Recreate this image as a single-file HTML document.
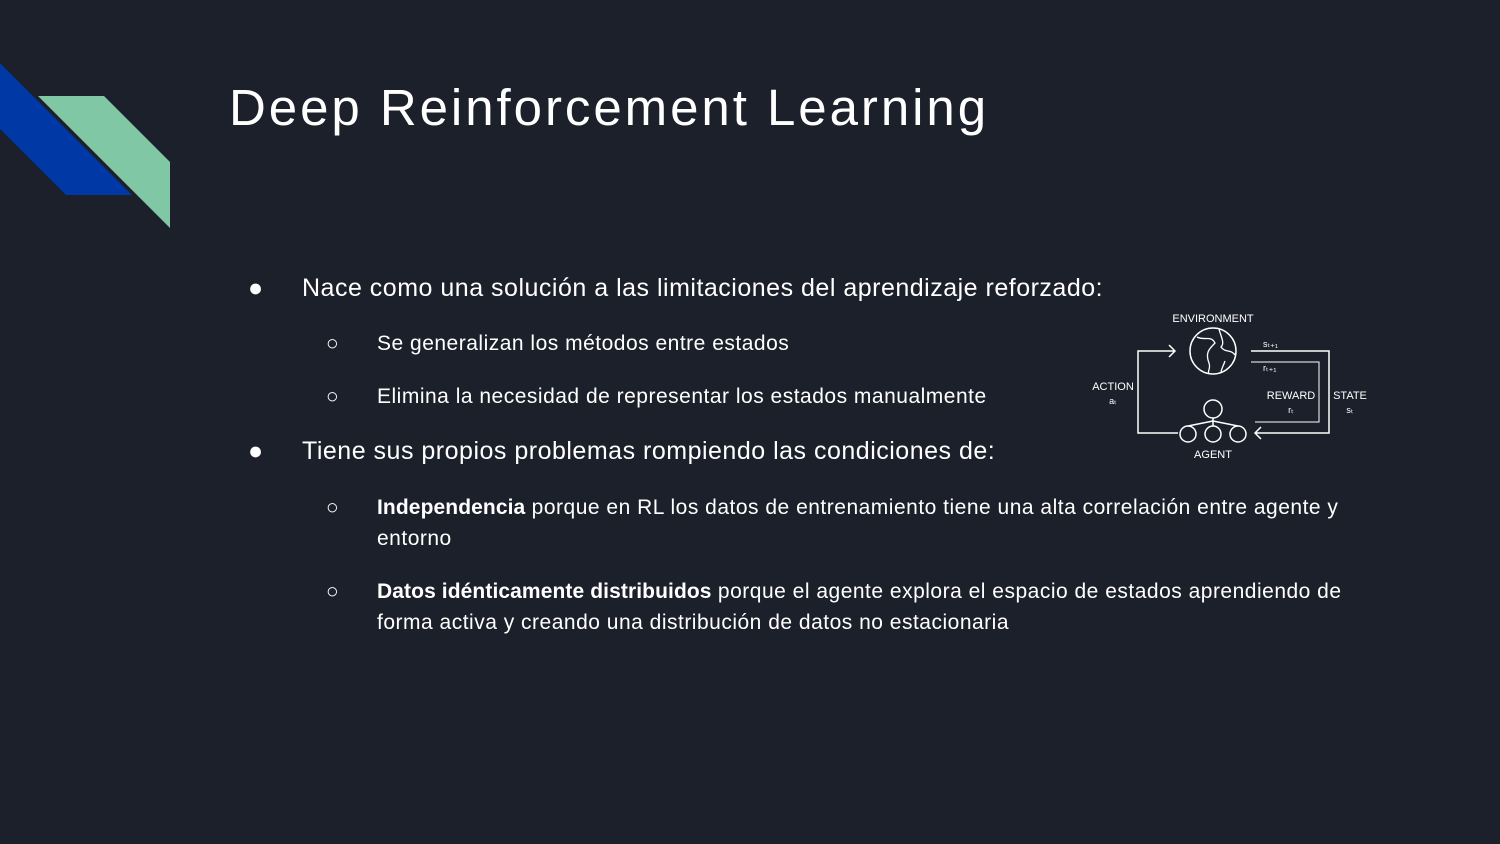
<!DOCTYPE html>
<html><head><meta charset="utf-8"><style>
body{margin:0;width:1500px;height:844px;background:#1c202b;overflow:hidden;font-family:"Liberation Sans",sans-serif;color:#fff;position:relative}
.t{position:absolute;left:229px;top:78px;font-size:51px;letter-spacing:2.95px}
.l{position:absolute;white-space:nowrap}
.b1{font-size:25px;letter-spacing:0.5px}
.b2{font-size:21px;letter-spacing:0.5px}
.b2 b{letter-spacing:0.1px}
</style></head><body>
<svg width="200" height="240" style="position:absolute;left:0;top:0">
<polygon points="0,63 132,195 66,195 0,129" fill="#0039a6"/>
<polygon points="38,96 104,96 170,162 170,228" fill="#80c7a5"/>
</svg>
<div class="t">Deep Reinforcement Learning</div>
<div class="l b1" style="left:248px;top:274px">●</div>
<div class="l b1" style="left:302px;top:274px">Nace como una solución a las limitaciones del aprendizaje reforzado:</div>
<div class="l b2" style="left:326px;top:332px">○</div>
<div class="l b2" style="left:377px;top:332px">Se generalizan los métodos entre estados</div>
<div class="l b2" style="left:326px;top:385px">○</div>
<div class="l b2" style="left:377px;top:385px">Elimina la necesidad de representar los estados manualmente</div>
<div class="l b1" style="left:248px;top:437px">●</div>
<div class="l b1" style="left:302px;top:437px">Tiene sus propios problemas rompiendo las condiciones de:</div>
<div class="l b2" style="left:326px;top:496px">○</div>
<div class="l b2" style="left:377px;top:492px;line-height:31px"><b>Independencia</b> porque en RL los datos de entrenamiento tiene una alta correlación entre agente y<br>entorno</div>
<div class="l b2" style="left:326px;top:580px">○</div>
<div class="l b2" style="left:377px;top:576px;line-height:31px"><b>Datos idénticamente distribuidos</b> porque el agente explora el espacio de estados aprendiendo de<br>forma activa y creando una distribución de datos no estacionaria</div>
<svg width="300" height="170" style="position:absolute;left:1085px;top:305px" font-family="Liberation Sans" font-size="11" fill="#fff">
<g fill="none" stroke="#fff" stroke-width="1.5">
<path d="M93,128 H53 V46 H90 M84,40 L90,46 L84,52"/>
<path d="M166,46 H244 V128 H170 M176,122 L170,128 L176,134"/>
<path d="M166,57 H234 V117 H170" stroke-width="1"/>
<circle cx="128" cy="46" r="23"/>
<path d="M112,32 C120,36 126,30 130,38 C124,44 120,48 124,58 C126,64 122,66 124,69 M134,24 C136,32 140,38 136,42 C140,48 146,44 150,50 M140,56 C138,62 136,64 136,68" stroke-width="1.3"/>
<circle cx="128" cy="104" r="9"/>
<circle cx="103" cy="129" r="8"/><circle cx="128" cy="129" r="8"/><circle cx="153" cy="129" r="8"/>
<path d="M128,113 V121 M128,116 L103,121 M128,116 L153,121"/>
</g>
<text x="128" y="17" text-anchor="middle">ENVIRONMENT</text>
<text x="128" y="153" text-anchor="middle">AGENT</text>
<text x="28" y="85" text-anchor="middle">ACTION</text>
<text x="28" y="99" text-anchor="middle" font-size="9">aₜ</text>
<text x="206" y="94" text-anchor="middle">REWARD</text>
<text x="206" y="108" text-anchor="middle" font-size="9">rₜ</text>
<text x="265" y="94" text-anchor="middle">STATE</text>
<text x="265" y="108" text-anchor="middle" font-size="9">sₜ</text>
<text x="178" y="42" font-size="9">sₜ₊₁</text>
<text x="178" y="66" font-size="9">rₜ₊₁</text>
</svg>
</body></html>
